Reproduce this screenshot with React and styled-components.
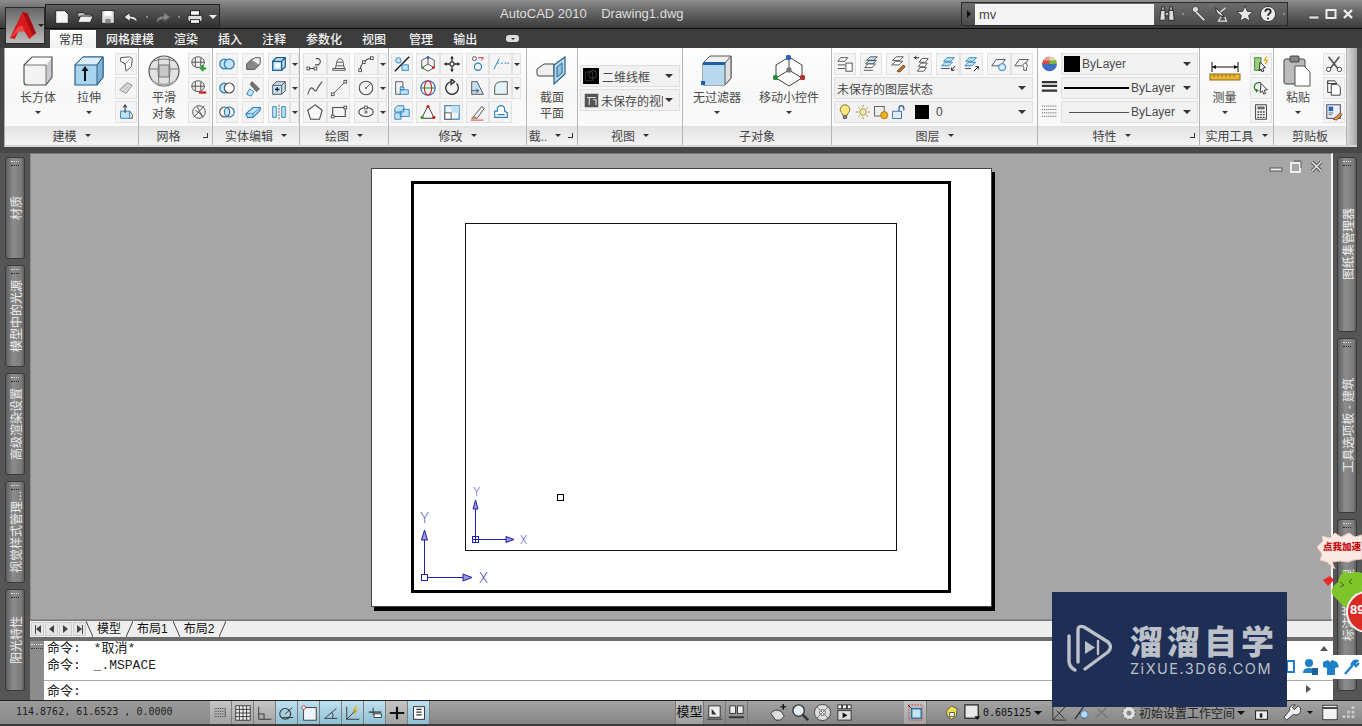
import React from 'react';
import styled, { createGlobalStyle } from 'styled-components';

const Global = createGlobalStyle`
  html, body { margin: 0; padding: 0; overflow: hidden; background: #404040; }
  body { font-family: "Liberation Sans", "Noto Sans CJK SC", sans-serif; }
  * { box-sizing: border-box; }
`;

const Screen = styled.div`position: relative; width: 1362px; height: 726px; display: flex; flex-direction: column; overflow: hidden; background: #474747;`;

/* ---------- drawings ---------- */
const D = '#4a4a4a', B = '#2b80b8', L = '#c4e2f5', W = '#fbfbfb';
const G = {
  wedge: <><path d="M4 3l10-1 3 2-1 9-6 5-1-8-5-3z" fill={W} stroke={D}/><path d="M9 10l6-6" stroke="#888"/></>,
  press: <><path d="M3 12l8-8 6 3-7 9z" fill="#ddd" stroke="#888"/><path d="M6 11l5-5M8 13l5-5" stroke="#aaa"/></>,
  presspull: <><path d="M4 9h10v8H4z" fill={L} stroke={B}/><path d="M9 11V2M7 5l2-3 2 3" stroke="#111"/><path d="M14 9l3 4v4h-3" stroke={D}/></>,
  meshadd: <><ellipse cx="9" cy="8" rx="7" ry="6" fill="#eee" stroke={D}/><path d="M2 8h14M6 3v10M12 3v10" stroke={D}/><path d="M14 11v7M11 15h7" stroke="#2a9d2a" strokeWidth="2.4"/></>,
  meshsub: <><ellipse cx="9" cy="8" rx="7" ry="6" fill="#eee" stroke={D}/><path d="M2 8h14M6 3v10M12 3v10" stroke={D}/><path d="M10 15h8" stroke="#c22" strokeWidth="2.6"/></>,
  meshcut: <><circle cx="10" cy="10" r="7" fill="#eee" stroke={D}/><path d="M4 16L16 3M6 8l8 6M8 4l6 12" stroke={D}/></>,
  union: <><circle cx="7.5" cy="10" r="5.5" fill={L} stroke={B} strokeWidth="1.4"/><circle cx="12.5" cy="10" r="5.5" fill={L} stroke={B} strokeWidth="1.4"/></>,
  subtract: <><circle cx="7.5" cy="10" r="5.5" fill={L} stroke={B} strokeWidth="1.4"/><circle cx="12.5" cy="10" r="5.5" fill="#fff" stroke={D} strokeWidth="1.2"/></>,
  intersect: <><circle cx="7.5" cy="10" r="5.5" fill="#fff" stroke={D} strokeWidth="1.2"/><circle cx="12.5" cy="10" r="5.5" fill="none" stroke={B} strokeWidth="1.4"/><path d="M10 5.5a5.5 5.5 0 010 9 5.5 5.5 0 010-9z" fill={L}/></>,
  extrudeface: <><path d="M3 10l5-5h9v6l-5 5H3z" fill="#888" stroke={D}/><path d="M8 5l5-2h5v6l-1 2" fill="#eee" stroke={D}/></>,
  taper: <><path d="M3 17l3-6 5 3-3 5z" fill={L} stroke={B}/><path d="M9 3l8 8-3 3-7-8z" fill="#777" stroke={D}/></>,
  eraser: <><path d="M2 12l8-7h8v3l-8 8H4z" fill={L} stroke={B} strokeWidth="1.2"/><path d="M2 12h8v4M10 12l8-7" stroke={B}/></>,
  cube: <><path d="M3 7l4-4h10v10l-4 4H3z" fill={L} stroke="#1a5f90" strokeWidth="1.4"/><path d="M3 7h10v10M13 7l4-4" stroke="#1a5f90" strokeWidth="1.4"/><rect x="6" y="9" width="5" height="5" fill="#fff"/></>,
  cube2: <><path d="M3 7l4-4h10v10l-4 4H3z" fill={L} stroke={D}/><path d="M3 7h10v10M13 7l4-4" stroke={D}/><path d="M8 9v5M5.5 11.5h5" stroke="#111" strokeWidth="1.2"/></>,
  split: <><path d="M3 4h4v12H3zM13 4h4v12h-4z" fill={L} stroke={B}/><path d="M10 2v16" stroke={D} strokeDasharray="2 1.5"/></>,
  polyline: <><path d="M2 15h7M11 4h3q4 3 0 7h-4" stroke={D} strokeWidth="1.2"/><rect x="1" y="13.5" width="3" height="3" fill="#fff" stroke={D}/><rect x="9" y="13.5" width="3" height="3" fill="#fff" stroke={D}/></>,
  helix: <><path d="M6 15l2-9q3-4 6 0l2 9M7 12h8M8 8h6" stroke={D}/><path d="M3 17h14v-2H3z" fill="#eee" stroke={D}/></>,
  arc: <><path d="M3 17Q5 6 16 3" stroke={D} strokeWidth="1.2"/><rect x="2" y="15.5" width="3" height="3" fill="#fff" stroke={D}/><rect x="15" y="2" width="3" height="3" fill="#fff" stroke={D}/><rect x="6" y="6.5" width="3" height="3" fill="#fff" stroke={D}/></>,
  spline: <path d="M2 17q3-10 6-6t4 1 6-9" stroke={D} strokeWidth="1.2"/>,
  line: <><path d="M3 17L17 3" stroke={D}/><rect x="1.5" y="15.5" width="3" height="3" fill="#fff" stroke={D}/><rect x="15.5" y="1.5" width="3" height="3" fill="#fff" stroke={D}/></>,
  circle: <><circle cx="10" cy="10" r="7.5" stroke={D} strokeWidth="1.2"/><path d="M10 10l5-5" stroke={D}/><circle cx="10" cy="10" r="1" fill={D}/></>,
  pentagon: <path d="M10 2l8 6-3 10H5L2 8z" fill="#f8f8f8" stroke={D} strokeWidth="1.2"/>,
  rect: <><path d="M3 5h14v10H3z" stroke={D} strokeWidth="1.2"/><rect x="1.5" y="13.5" width="3" height="3" fill="#fff" stroke={D}/><rect x="15.5" y="3.5" width="3" height="3" fill="#fff" stroke={D}/></>,
  ellipse: <><ellipse cx="10" cy="10" rx="8" ry="5" stroke={D} strokeWidth="1.2"/><path d="M10 8v4M8 10h4" stroke={D}/><rect x="8.5" y="3.5" width="3" height="3" fill="#fff" stroke={D}/></>,
  scale: <><path d="M2 18L18 2" stroke="#111" strokeWidth="1.4"/><circle cx="6" cy="6" r="3" fill={L} stroke={B}/><rect x="10" y="11" width="7" height="6" fill={L} stroke={B}/></>,
  rot3d: <><path d="M10 2l7 4v8l-7 4-7-4V6z" stroke={D}/><path d="M10 10V4M10 10l-5 3M10 10l5 3" stroke={D}/><circle cx="10" cy="3" r="1.6" fill="#2a62b8"/><circle cx="4" cy="14" r="1.6" fill="#2a9d2a"/><circle cx="16" cy="14" r="1.6" fill="#c22"/></>,
  move: <><path d="M10 2v16M2 10h16" stroke="#222" strokeWidth="1.4"/><path d="M8 4l2-3 2 3zM8 16l2 3 2-3zM4 8l-3 2 3 2zM16 8l3 2-3 2z" fill="#222"/><rect x="8" y="8" width="4" height="4" fill="#fff" stroke="#222"/></>,
  align: <><path d="M3 3h8v6h-3" stroke={D} fill="none"/><path d="M3 3v14h6" stroke={D}/><path d="M8 12h9v5H8zM8 9h4v3H8z" fill={L} stroke={B}/></>,
  globe: <><circle cx="10" cy="10" r="8" fill="#eee" stroke="#2a62b8" strokeWidth="1.2"/><ellipse cx="10" cy="10" rx="4" ry="8" stroke="#c22" strokeWidth="1.2"/><path d="M2 10h16" stroke="#2a9d2a" strokeWidth="1.2"/></>,
  rotate: <path d="M15 5a7 7 0 11-5-2M9 0v6l4-3z" stroke="#333" strokeWidth="1.5"/>,
  stack: <><path d="M2 6l3-3h7v7H2zM8 10l3-3h7v8H8zM2 11h7v7H2z" fill={L} stroke={B}/></>,
  mirror: <><path d="M10 3L3 17M10 3l7 14M3 17h14" stroke="#333"/><circle cx="10" cy="4" r="1.8" fill="#c22"/><circle cx="3.5" cy="16" r="1.8" fill="#2a9d2a"/><circle cx="16.5" cy="16" r="1.8" fill="#c22"/></>,
  fillet3: <><rect x="2" y="3" width="16" height="15" stroke={B} strokeWidth="1.3"/><rect x="9" y="3" width="9" height="8" fill={L}/><rect x="2" y="11" width="7" height="7" fill="#fff" stroke={D}/></>,
  orbit: <><circle cx="10" cy="13" r="4" stroke={B} strokeWidth="1.3"/><circle cx="6" cy="4" r="2.2" stroke={D}/><path d="M10 3h6M14 6l2-3" stroke="#c22"/></>,
  break: <path d="M2 16L8 4M6 9h2M10 9h2M14 9h2M17 9h2" stroke={B} strokeWidth="1.1"/>,
  stretch: <><path d="M3 3h6l7 14H3z" fill={L} stroke={D}/><path d="M3 13h7M8 11l3 2-3 2" stroke={D}/></>,
  round: <path d="M3 17V10Q3 3 11 3h6v14z" fill="#e4f2fa" stroke={D}/>,
  brush: <><path d="M3 17l3-3 8-10 3 2-8 11z" fill="#eee" stroke={D}/><path d="M2 19h14" stroke="#c33"/><path d="M3 17l3-3 3 3-3 1z" fill="#b96"/></>,
  offset: <path d="M3 16h14v-5l-3-2V7q0-4-4-4T6 7v2H3zM6 13h8" fill="#fff" stroke={B} strokeWidth="1.3"/>,
  layer1: <><path d="M2 7l3-4h8l-3 4z" fill="#fff" stroke={D}/><path d="M2 11h8M2 15h8" stroke={D}/><rect x="11" y="9" width="7" height="9" fill="#fff" stroke={D}/></>,
  layer2: <><path d="M5 6l4-4h8l-4 4zM4 10l4-4h8l-4 4z" fill={L} stroke={D}/><path d="M3 14l4-4h8l-4 4z" fill="#fff" stroke={D}/><path d="M2 17h10" stroke={D}/></>,
  layer3: <><path d="M4 6l4-4h8l-4 4zM3 11l4-4h8l-4 4z" fill="#fff" stroke={D}/><path d="M9 18l7-7 2 2-6 6z" fill="#b8722a" stroke="#6a3c10"/></>,
  layer4: <><path d="M8 8l3-4h7l-3 4zM7 13l3-4h7l-3 4zM6 18l3-4h7l-3 4z" fill="#fff" stroke={D}/><path d="M2 3h6M5 1l-2 2 2 2" stroke="#111"/></>,
  layer5: <><path d="M5 7l4-4h8l-4 4zM3 12l4-4h8l-4 4z" fill={L} stroke={B}/><path d="M2 15h10" stroke={D}/><path d="M18 12l-4 5M14 14v3h3" stroke="#111"/></>,
  layer6: <><path d="M3 7l4-4h8l-4 4zM2 12l4-4h8l-4 4z" fill={L} stroke={B}/><path d="M2 15h7" stroke={D}/><path d="M12 18l5-5M14 13h3v3" stroke="#111"/></>,
  layer7: <><path d="M2 12l5-7h10l-3 4" stroke={D}/><path d="M2 12h8" stroke={D}/><circle cx="13.5" cy="13.5" r="4" fill={L} stroke={B}/><circle cx="13.5" cy="13.5" r="1.4" fill="#fff"/></>,
  layer8: <><path d="M2 12l5-7h10l-3 4M2 12h8" stroke={D}/><path d="M13 9a3 3 0 013 3l-1 2v3h-3v-3l-1-2a3 3 0 012-3z" fill="#fff" stroke={D}/></>,
  bulb: <><path d="M10 1a6 6 0 016 6c0 3-3 4-3 7H7c0-3-3-4-3-7a6 6 0 016-6z" fill="#ffe680" stroke="#6a5a20"/><path d="M8 15h4v3H8z" fill="#99b" stroke="#444"/></>,
  sun: <><circle cx="10" cy="10" r="4" fill="#fff2a8" stroke="#8a7a2a"/><path d="M10 1v3M10 16v3M1 10h3M16 10h3M4 4l2 2M14 14l2 2M4 16l2-2M14 6l2-2" stroke="#8a7a2a"/></>,
  freeze: <><rect x="2" y="3" width="12" height="12" fill="#eee" stroke="#444"/><circle cx="14" cy="14" r="4.5" fill="#f0b020" stroke="#a56a00"/></>,
  lock: <><rect x="2" y="9" width="11" height="9" fill="#d9ecf8" stroke="#2a5f90"/><path d="M10 9V5a3 3 0 016 0v3" stroke="#2a5f90" strokeWidth="1.5"/></>,
  wheel: <><circle cx="10" cy="10" r="8.5" fill="#7c3fb0"/><path d="M10 10V1.500A8.500 8.500 0 0118.500 10z" fill="#f1c232"/><path d="M10 10H1.500A8.500 8.500 0 0110 1.500z" fill="#d94b3a"/><path d="M1.500 10h17a8.500 8.500 0 01-17 0z" fill="#3c6fc0"/><path d="M3 6h14a8 8 0 00-14 0z" fill="#e9e9e9" opacity=".6"/><path d="M10 6h8l.5 4H10z" fill="#5fb04a" opacity=".8"/></>,
  lines: <path d="M1 3h18M1 7.500h18M1 13h18" stroke="#333" strokeWidth="2.600"/>,
  dashes: <path d="M1 3h18M1 7h18M1 11h18M1 15h18" stroke="#555" strokeDasharray="1.500 1"/>,
  matchprop: <><rect x="3" y="3" width="7" height="14" fill="#9bd07a" stroke="#3a7a2a"/><path d="M9 8l6 6-3 .5L13 18l-2 .5-1-3-2 2z" fill="#fff" stroke="#222"/><path d="M16 2l-2 4h3l-2 4" stroke="#e6a800" strokeWidth="1.400"/></>,
  quick: <><path d="M10 4H7a5 5 0 00-4 7l2 2M7 12l-2 2V11" stroke="#2a7a3a" strokeWidth="1.400"/><path d="M10 5l7 7-3.400.4L15 16l-2 .8-1.300-3.400L9 15z" fill="#fff" stroke="#222"/></>,
  calc: <><rect x="4" y="2" width="12" height="16" fill="#f2f2f2" stroke="#333"/><rect x="6" y="4" width="8" height="3" fill="#666"/><path d="M6 10h2M9 10h2M12 10h2M6 13h2M9 13h2M12 13h2M6 16h2M9 16h2M12 16h2" stroke="#444" strokeWidth="1.400"/></>,
  cut: <><path d="M4 2l11 14M16 2L5 16" stroke="#555" strokeWidth="1.800"/><circle cx="4" cy="16" r="2.400" stroke="#333" fill="#fff"/><circle cx="16" cy="16" r="2.400" stroke="#333" fill="#fff"/></>,
  copy: <><path d="M3 2h8l2 3H3z M3 2v13h5" fill="#fff" stroke="#333"/><path d="M7 6h7l3 3v9H7z" fill="#fff" stroke="#333"/></>,
  matchbrush: <><rect x="2" y="2" width="15" height="15" fill="#e8eef8" stroke="#334"/><rect x="4" y="4" width="5" height="5" fill="#2a5fb0"/><path d="M4 11h5M4 13h4" stroke="#666"/><path d="M9 18l8-7 2 2-6 6z" fill="#d69a2a" stroke="#845"/></>,
  view1: <><rect x="0" y="0" width="20" height="20" fill="#000"/><circle cx="12" cy="8" r="5" stroke="#555"/><path d="M3 5h9v11H3z" stroke="#444"/></>,
  view2: <><rect x="1" y="1" width="18" height="18" fill="#555"/><path d="M4 6h12M7 6v10M12 9h4v7" stroke="#ddd" strokeWidth="1.500"/></>,
  fnew: <path d="M3 3h10l4 4v10H3z" fill="#f4f4f4" stroke="#222"/>,
  fopen: <><path d="M2 5h6l2 2h7v3H2z" fill="#bbb" stroke="#222"/><path d="M2 16l3-7h14l-3 7z" fill="#eee" stroke="#222"/></>,
  fsave: <><path d="M3 3h14v14H3z" fill="#ddd" stroke="#222"/><rect x="6" y="3.500" width="8" height="5" fill="#fff"/><rect x="7" y="12" width="6" height="5" fill="#888"/></>,
  undo: <path d="M17 16q0-7-8-7V5L2 10l7 5v-3q4 0 8 4z" fill="#e9e9e9" stroke="#222"/>,
  redo: <path d="M3 16q0-7 8-7V5l7 5-7 5v-3q-4 0-8 4z" fill="#888" stroke="#555"/>,
  print: <><rect x="2" y="8" width="16" height="7" rx="2" fill="#ddd" stroke="#111"/><rect x="5" y="3" width="10" height="5" fill="#fff" stroke="#111"/><rect x="5" y="13" width="10" height="4" fill="#fff" stroke="#111"/></>,
  binoc: <><path d="M3 6h5v11H2zM12 6h5l1 11h-6z" fill="#ddd" stroke="#222"/><path d="M4 2h3v4H4zM13 2h3v4h-3zM8 8h4v4H8z" fill="#bbb" stroke="#222"/></>,
  key: <><circle cx="6" cy="5" r="3.500" fill="#ddd" stroke="#333"/><path d="M8 7l9 9-2 2-9-9" fill="#ddd" stroke="#333"/></>,
  sat: <><path d="M3 3q0 9 10 10z" fill="#ddd" stroke="#222"/><path d="M8 8l6-5M9 13l-3 5h9l-2-5" stroke="#ddd" strokeWidth="1.400"/></>,
  star: <path d="M10 1l2.600 6 6.400.5-5 4.200 1.600 6.300-5.600-3.400L4.400 18 6 11.700 1 7.500 7.400 7z" fill="#e8e8e8" stroke="#333"/>,
  help: <><circle cx="10" cy="10" r="8.500" fill="#ececec" stroke="#222"/><path d="M7 7.500a3 3 0 116 0c0 2-3 2-3 4.500" stroke="#222" strokeWidth="2"/><circle cx="10" cy="15" r="1.200" fill="#222"/></>,
  s_snap: <path d="M3 5h12M3 8h12M3 11h12M3 14h12M15 5v9" stroke="#222" strokeDasharray="1 1"/>,
  s_grid: <><rect x="2" y="2" width="16" height="16" fill="#eee" stroke="#333"/><path d="M2 6h16M2 10h16M2 14h16M6 2v16M10 2v16M14 2v16" stroke="#333"/></>,
  s_ortho: <path d="M3 3v14h14M3 11h6v6" stroke="#333"/>,
  s_polar: <><circle cx="8" cy="11" r="6" stroke="#333" strokeWidth="1.200"/><path d="M8 11l8-7M5 15h12" stroke="#333"/></>,
  s_osnap: <><rect x="4" y="4" width="14" height="14" fill="#eef6fb" stroke="#333"/><circle cx="4" cy="4" r="2.200" fill="#fff" stroke="#c33"/></>,
  s_otrack: <path d="M3 16L16 5M3 16h14M11 9q2 3 1 7" stroke="#333"/>,
  s_ducs: <><path d="M3 17V3M3 17h14M3 17L12 8" stroke="#333"/><path d="M14 2l-3 5h3l-2 4" stroke="#e6a800" strokeWidth="1.400"/></>,
  s_dyn: <><path d="M3 9h14" stroke="#333" strokeWidth="1.400"/><path d="M8 4v8" stroke="#333"/><rect x="9" y="11" width="8" height="4" fill="#fff" stroke="#333"/></>,
  s_lw: <path d="M2 10h16M10 3v14" stroke="#111" strokeWidth="2.400"/>,
  s_qp: <><rect x="4" y="3" width="12" height="14" fill="#fff" stroke="#222"/><path d="M7 6h6M7 9h6M7 12h6" stroke="#333" strokeWidth="1.400"/></>,
  s_layout1: <><path d="M4 3h12v12H4z" fill="#eee" stroke="#333"/><path d="M7 6v6h5z" fill="#333"/><path d="M2 17h16" stroke="#333"/></>,
  s_layout2: <><path d="M3 3h6v8H3zM11 3h6v8h-6z" fill="#eee" stroke="#333"/><path d="M2 15h16" stroke="#333" strokeWidth="2"/></>,
  s_pan: <><path d="M2 11q4-6 11-2l3 5-4 4H7z" fill="#ddd" stroke="#333"/><path d="M15 1v6M12 4h6" stroke="#111" strokeWidth="1.400"/></>,
  s_zoom: <><circle cx="8" cy="8" r="6" fill="#e4eef5" stroke="#333" strokeWidth="1.400"/><path d="M12 12l6 6" stroke="#333" strokeWidth="2.600"/></>,
  s_wheel: <><circle cx="10" cy="10" r="8.500" fill="#ddd" stroke="#444"/><circle cx="10" cy="10" r="3" fill="#fff" stroke="#444"/><path d="M4 4l12 12M16 4L4 16" stroke="#777"/></>,
  s_show: <><rect x="3" y="2" width="4" height="4" fill="#fff" stroke="#333"/><rect x="8" y="2" width="4" height="4" fill="#fff" stroke="#333"/><rect x="13" y="2" width="4" height="4" fill="#fff" stroke="#333"/><rect x="3" y="8" width="14" height="10" fill="#ddd" stroke="#333"/><path d="M8 10l5 3-5 3z" fill="#111"/></>,
  s_maxvp: <><path d="M3 2h14v16H3z" stroke="#c33" strokeDasharray="1.500 1.500"/><rect x="6" y="6" width="10" height="10" fill={L} stroke="#2a6f9a" strokeWidth="1.400"/><path d="M2 2l4 4" stroke="#333"/></>,
  s_hand: <><path d="M5 8l5-5 6 3-1 8-5 3-5-4z" fill="#ece24a" stroke="#555"/><path d="M8 10h5v4H8z" fill="#fff" stroke="#555"/></>,
  s_vp: <><rect x="2" y="2" width="14" height="14" fill="#e8e8e8" stroke="#222" strokeWidth="1.300"/><path d="M12 14h6l-3 4z" fill="#111"/></>,
  s_anno1: <path d="M4 2v16h14M4 18L17 4M8 8l8 8" stroke="#333"/>,
  s_anno2: <><path d="M4 17l5-7 5 7M9 10l4-6" stroke="#333" strokeWidth="1.400"/><circle cx="14" cy="12" r="4" fill="#b8d8f0" stroke="#47a"/></>,
  s_anno3: <path d="M3 15l6-5 6 5M9 10l5-5M5 6l4 4" stroke="#777" strokeWidth="1.600"/>,
  s_gear: <><circle cx="10" cy="10" r="8" fill="#ddd" stroke="#444" strokeDasharray="3 2"/><circle cx="10" cy="10" r="4" fill="#888" stroke="#eee" strokeWidth="1.500"/></>,
  s_lock: <><rect x="3" y="8" width="14" height="10" fill="#eee" stroke="#222" strokeWidth="1.200"/><rect x="8" y="11" width="3" height="5" fill="#222"/></>,
  s_wrench: <path d="M17 3l-4 4-2-2 3-3a5 5 0 00-6 6L2 15l3 3 7-6a5 5 0 005-9z" fill="#eee" stroke="#333"/>,
  s_win: <><rect x="2" y="2" width="16" height="16" fill="#f2f2f2" stroke="#333"/><path d="M2 5h16" stroke="#333" strokeWidth="2"/></>,
  s_grip: <path d="M14 3h3v3h-3zM9 8h3v3H9zM14 8h3v3h-3zM4 13h3v3H4zM9 13h3v3H9zM14 13h3v3h-3z" fill="#ccc"/>,
};
const Glyph = ({ name, size = 18 }) => (
  <svg width={size} height={size} viewBox="0 0 20 20" fill="none">{G[name]}</svg>
);

const Big = {
  box: <><path d="M2 10l8-8h20v20l-6 8H5q-3 0-3-3z" fill="#f2f2f2"/><path d="M24 10l6-8v20l-6 8z" fill="#c8ccd0"/><path d="M2 10l8-8h20l-6 8z" fill="#fbfbfb"/><path d="M2 10h22v20" fill="none" stroke="#777"/><path d="M2 10l8-8h20v20l-6 8H5q-3 0-3-3z" fill="none" stroke="#555" strokeWidth="1.200"/></>,
  extrude: <><path d="M2 10l8-8h20v20l-6 8H2z" fill="#a8d4ee" stroke="#2a5f85" strokeWidth="1.200"/><path d="M2 10l8-8h20l-6 8z" fill="#d9eefa" stroke="#2a5f85"/><path d="M24 10l6-8v20l-6 8z" fill="#7fb4d6" stroke="#2a5f85"/><path d="M12 26V13" stroke="#111" strokeWidth="2"/><path d="M8.500 16l3.500-5 3.500 5z" fill="#111"/></>,
  smooth: <><circle cx="16" cy="16" r="15" fill="#e2e2e2" stroke="#555" strokeWidth="1.200"/><path d="M1.500 14h29M11 2q-2 14 0 27M21 2q2 14 0 27" stroke="#777" fill="none"/><path d="M6 6q10-4 20 0" stroke="#777" fill="none"/><rect x="11" y="10" width="10" height="12" fill="#c8c8c8" stroke="#777"/><path d="M3 24q13 9 26 0l-3 4q-10 6-20 0z" fill="#aaa"/></>,
  section: <><path d="M1 14l7-5h10v12H3q-2 0-2-2z" fill="#f0f0f0" stroke="#444"/><path d="M18 10l11-8v17l-11 10z" fill="#b8dcf2" stroke="#2a5f85" strokeWidth="1.200"/><path d="M21 12l5-4v10l-5 4z" fill="#8fc4e6" stroke="#2a5f85"/></>,
  filter: <><path d="M2 8l7-7h21v22l-6 7H2z" fill="#f0f0f0" stroke="#555"/><path d="M2 8h22v22H2z" fill="#b6d9ef"/><path d="M24 8l6-7v22l-6 7z" fill="#e0e0e0" stroke="#555"/><path d="M2 7h22v3H2z" fill="#1f5fa8"/><rect x="0" y="26" width="4" height="4" fill="#1f5fa8"/></>,
  gizmo: <><path d="M16 2l13 8v13l-13 8-13-8V10z" fill="none" stroke="#444"/><path d="M16 15V2M16 15L3 23M16 15l13 8" stroke="#444"/><rect x="13" y="0" width="5" height="5" rx="1.500" fill="#2a62b0"/><rect x="0" y="20" width="5" height="5" rx="1.500" fill="#2a8f3a"/><rect x="27" y="20" width="5" height="5" rx="1.500" fill="#b03030"/><rect x="13.500" y="12.500" width="5" height="5" rx="1.500" fill="#777"/></>,
  measure: <><path d="M3 12h26" stroke="#111"/><path d="M3 7v10M29 7v10" stroke="#111"/><path d="M3 12l4-2v4zM29 12l-4-2v4z" fill="#111"/><rect x="1" y="19" width="30" height="6" fill="#e8b632" stroke="#8a6a10"/><path d="M5 19v3M9 19v3M13 19v3M17 19v3M21 19v3M25 19v3" stroke="#8a6a10"/></>,
  paste: <><rect x="2" y="4" width="21" height="25" rx="2" fill="#bbb" stroke="#444"/><rect x="8" y="1" width="9" height="6" rx="1" fill="#888" stroke="#444"/><path d="M13 11h9l6 6v14H13z" fill="#fff" stroke="#555"/></>,
};
const BigIcon = ({ name }) => <svg width="32" height="32" viewBox="0 0 32 32">{Big[name]}</svg>;

/* ---------- title bar ---------- */
const TitleBar = styled.header`
  height: 29px; flex: none; display: flex; align-items: flex-start; position: relative;
  background: linear-gradient(#8d8d8d, #6a6a6a 35%, #3b3b3b 96%, #0e0e0e 97%);
`;
const Qat = styled.div`
  margin: 4px 0 0 45px; width: 175px; height: 24px; display: flex; align-items: center; gap: 5px; padding-left: 7px;
  background: linear-gradient(#5e5e5e, #2f2f2f); border: 1px solid #222; border-bottom: 0;
`;
const QatDot = styled.i`width: 2px; height: 2px; background: #888; margin: 0 1px;`;
const Caret = styled.i`
  display: inline-block; width: 0; height: 0; flex: none;
  border-left: ${p => p.$s || 3}px solid transparent; border-right: ${p => p.$s || 3}px solid transparent;
  border-top: ${p => p.$s || 3}px solid ${p => p.$c || '#333'};
`;
const AppButton = styled.div`
  position: absolute; z-index: 3; left: 5px; top: 7px; width: 40px; height: 37px; border: 1px solid #2a2a2a;
  background: linear-gradient(#666, #bbb); display: flex; align-items: center; padding-left: 2px; gap: 1px;
`;
const Title = styled.div`
  position: absolute; left: 500px; top: 6px; color: #dedede; font-size: 13px; line-height: 16px; white-space: pre;
`;
const Search = styled.div`
  margin: 2px 0 0 auto; width: 327px; height: 24px; display: flex; align-items: center; border: 1px solid #2b2b2b;
  background: linear-gradient(#6c6c6c, #4c4c4c);
`;
const SearchArrow = styled.i`width: 0; height: 0; margin: 0 4px 0 5px; border-left: 4px solid #111; border-top: 4px solid transparent; border-bottom: 4px solid transparent;`;
const SearchInput = styled.div`width: 179px; height: 21px; background: #f4f4f4; color: #444; font-size: 13px; line-height: 21px; padding-left: 4px;`;
const SearchIcons = styled.div`display: flex; align-items: center; gap: 5px; padding-left: 4px;`;
const WinButtons = styled.div`display: flex; gap: 5px; align-items: center; margin: 8px 8px 0 20px;`;
const WinBtn = styled.svg`width: 12px; height: 12px;`;

/* ---------- tabs ---------- */
const TabBar = styled.nav`height: 19px; flex: none; display: flex; align-items: flex-end; padding-left: 50px; background: #3d3d3d;`;
const Tab = styled.div`
  height: 18px; padding: ${p => (p.$active ? '0 13px 0 9px' : '0 10px')}; margin-left: ${p => p.$ml || 0}px; font-size: 12px; line-height: 20px;
  color: ${p => (p.$active ? '#333' : '#f1f1f1')};
  background: ${p => (p.$active ? 'linear-gradient(#fff,#f0f0f0)' : 'transparent')};
  font-weight: ${p => (p.$active ? 400 : 500)};
`;
const TabPill = styled.i`width: 13px; height: 7px; margin: 0 0 6px 19px; background: #ddd; border-radius: 3px; display: flex; align-items: center; justify-content: center;`;

/* ---------- ribbon ---------- */
const Ribbon = styled.section`
  height: 99px; flex: none; margin: 0 5px 0 4px; display: flex; background: #ddd;
  border-left: 1px solid #aaa; border-bottom: 2px solid #d6d6d6;
`;
const Panel = styled.div`
  width: ${p => p.$w}px; flex: none; display: flex; flex-direction: column; border-right: 1px solid #b4b4b4;
`;
const RibbonEnd = styled.div`flex: 1; background: linear-gradient(90deg, #d8d8d8, #a5a5a5);`;
const Body = styled.div`
  height: 78px; flex: none; display: flex; gap: ${p => p.$gap || 0}px; padding: 5px 0 0 ${p => p.$pl || 0}px;
  background: linear-gradient(#fefefe, #f7f7f7 60%, #fafafa);
`;
const Footer = styled.div`
  flex: 1; position: relative; display: flex; align-items: center; justify-content: center; gap: 8px; padding: 0 ${p => p.$pr || 0}px 0 0;
  font-size: 12px; color: #444; background: linear-gradient(#e2e2e2, #f4f4f4);
`;
const Launcher = styled.i`
  position: absolute; right: 4px; top: 7px; width: 5px; height: 5px; border-right: 1px solid #333; border-bottom: 1px solid #333;
`;
const Large = styled.div`
  width: ${p => p.$w}px; flex: none; display: flex; flex-direction: column; align-items: center; gap: 3px;
  font-size: 12px; line-height: 16px; color: #4a4a4a; padding-top: 2px;
`;
const LargeLabel = styled.div`text-align: center; white-space: nowrap; margin-bottom: 2px;`;
const Col = styled.div`display: flex; flex-direction: column; gap: 2px; width: ${p => (p.$w ? `${p.$w}px` : 'auto')}; padding-top: ${p => p.$pt || 0}px;`;
const Row = styled.div`display: flex; gap: ${p => p.$gap || 0}px;`;
const Small = styled.div`
  width: ${p => p.$w || 22}px; height: 22px; flex: none; display: flex; align-items: center; justify-content: center;
  background: ${p => (p.$bare ? 'transparent' : '#f4f4f4')}; border: 1px solid ${p => (p.$bare ? 'transparent' : '#e2e2e2')};
`;
const Drop = styled(Small)`width: 9px;`;
const Combo = styled.div`
  width: ${p => p.$w}px; height: ${p => p.$h || 22}px; flex: none; display: flex; align-items: center; gap: ${p => p.$gap ?? 2}px; padding: 0 6px 0 ${p => p.$pl ?? 2}px;
  background: #f1f1f1; border: 1px solid #dfdfdf; font-size: 12px; color: #4a4a4a; white-space: nowrap; overflow: hidden;
`;
const ComboText = styled.span`flex: 1; overflow: hidden;`;
const Swatch = styled.i`width: ${p => p.$s || 16}px; height: ${p => p.$s || 16}px; flex: none; background: #000;`;
const LineSample = styled.i`width: ${p => p.$w}px; height: ${p => p.$h}px; background: ${p => p.$c}; flex: none;`;
const DarkGap = styled.div`height: 6px; flex: none; background: #474747;`;

/* ---------- main ---------- */
const Main = styled.div`flex: 1; min-height: 0; display: flex;`;
const Palette = styled.aside`
  width: ${p => p.$w}px; flex: none; display: flex; flex-direction: column; gap: 6px; padding: 4px 5px 9px ${p => p.$pl}px; background: #565656;
`;
const PaletteTab = styled.div`
  height: ${p => p.$h}px; flex: ${p => (p.$h ? 'none' : 1)}; position: relative; display: flex; align-items: center; justify-content: center;
  border: 1px solid #3a3a3a; border-radius: 3px; background: linear-gradient(90deg, #5f5f5f, #8c8c8c 40%, #7b7b7b 85%, #5c5c5c);
  color: #ececec; font-size: 12px; overflow: hidden;
  &::before { content: ''; position: absolute; top: 3px; left: 5px; right: 5px; height: 3px; border-top: 1px dotted #ddd; border-bottom: 1px dotted #222; }
`;
const PaletteText = styled.span`writing-mode: vertical-rl; text-orientation: sideways; transform: rotate(180deg); white-space: nowrap;`;
const Center = styled.div`flex: 1; min-width: 0; display: flex; flex-direction: column;`;
const Canvas = styled.div`
  height: 467px; flex: none; position: relative; background: #a6a6a6; border: 1px solid #8b8b8b; border-right: 2px solid #f4f4f4; border-top-color: #777;
`;
const Paper = styled.div`position: absolute; left: 340px; top: 14px; width: 621px; height: 439px; background: #fff; border: 1px solid #444; box-shadow: 3px 4px 0 #000;`;
const Frame = styled.div`position: absolute; left: 39px; top: 12px; width: 540px; height: 412px; border: 3px solid #000;`;
const Viewport = styled.div`position: absolute; left: 93px; top: 54px; width: 432px; height: 328px; border: 1px solid #111;`;
const Overlay = styled.svg`position: absolute; left: -1px; top: -1px; width: 1303px; height: 467px;`;
const UcsText = styled.text`font-family: "Inter", "Liberation Sans", sans-serif; font-weight: 200; fill: #1d1db0;`;
const VpControls = styled.svg`position: absolute; right: 8px; top: 6px; width: 54px; height: 14px;`;

const LayoutBar = styled.div`
  height: 17px; flex: none; display: flex; align-items: center; background: #eeeeee; border-top: 1px solid #777; border-right: 2px solid #f4f4f4; font-size: 12px; color: #111;
`;
const Nav = styled.div`width: 13px; height: 14px; display: flex; align-items: center; justify-content: center; background: #e6e6e6; border: 1px solid #ccc;`;
const NavGroup = styled.div`display: flex; margin: 0 0 0 1px; gap: 1px;`;
const NavStop = styled.i`width: 1px; height: 9px; background: #444;`;
const Arrow = styled.i`
  width: 0; height: 0; border-top: 4px solid transparent; border-bottom: 4px solid transparent;
  ${p => (p.$dir === 'l' ? 'border-right: 5px solid #444;' : 'border-left: 5px solid #444;')}
`;
const LayoutTab = styled.span`padding: 0 5px 0 4px; line-height: 15px;`;
const Slant = styled.svg`width: 7px; height: 16px; flex: none;`;
const Separator = styled.div`height: 4px; flex: none; background: #6d6d6d;`;

const Command = styled.div`flex: 1; min-height: 0; display: flex; background: #8c8c8c;`;
const Gutter = styled.div`
  width: 14px; flex: none; position: relative;
  &::before { content: ''; position: absolute; top: 3px; left: 1px; width: 12px; height: 3px; border-top: 1px dotted #eee; border-bottom: 1px dotted #333; }
`;
const CommandMain = styled.div`flex: 1; min-width: 0; display: flex; flex-direction: column; background: #fff;`;
const History = styled.div`
  height: 40px; flex: none; padding: 0 3px; font-family: "Liberation Mono", "Noto Sans CJK SC", monospace; font-size: 13px; line-height: 16.5px; color: #222;
  border-bottom: 1px solid #aaa; position: relative; white-space: pre; word-spacing: 5px;
`;
const Prompt = styled.div`flex: 1; padding: 2px 3px 0; font-family: "Liberation Mono", "Noto Sans CJK SC", monospace; font-size: 13px; line-height: 18px; color: #222; position: relative;`;
const ScrollUp = styled.i`position: absolute; right: 5px; top: 5px; width: 0; height: 0; border-left: 4px solid transparent; border-right: 4px solid transparent; border-bottom: 5px solid #555;`;
const ScrollRight = styled.i`position: absolute; right: 22px; top: 4px; width: 0; height: 0; border-top: 4px solid transparent; border-bottom: 4px solid transparent; border-left: 5px solid #555;`;

/* ---------- status ---------- */
const Status = styled.footer`
  height: 26px; flex: none; display: flex; align-items: stretch; border-top: 1px solid #222; border-bottom: 2px solid #3a3a3a;
  background: linear-gradient(#a3a3a3, #858585); color: #222;
`;
const Coords = styled.div`width: 210px; flex: none; padding-left: 16px; font-family: "DejaVu Sans Mono", monospace; font-size: 10px; line-height: 22px; background: linear-gradient(#9a9a9a,#8a8a8a); white-space: pre;`;
const Toggle = styled.div`
  width: ${p => p.$w || 22}px; flex: none; display: flex; align-items: center; justify-content: center; border-right: 1px solid #7c7c7c;
  background: ${p => (p.$on ? 'linear-gradient(#bfe0ee,#8fc0d4)' : 'linear-gradient(#c6c6c6,#a2a2a2)')};
`;
const StatusIcon = styled.div`width: ${p => p.$w || 22}px; flex: none; display: flex; align-items: center; justify-content: center; border-right: ${p => (p.$edge ? '1px solid #777' : '0')};`;
const Spacer = styled.div`width: ${p => p.$w}px; flex: none;`;
const ModelLabel = styled.div`width: 29px; flex: none; font-size: 13px; line-height: 22px; text-align: center; color: #111; border-left: 1px solid #777; border-right: 1px solid #777; background: linear-gradient(#c0c0c0,#a0a0a0);`;
const ScaleText = styled.div`width: 64px; flex: none; display: flex; align-items: center; gap: 3px; font-family: "DejaVu Sans Mono", monospace; font-size: 10px; color: #111;`;
const Workspace = styled.div`width: 125px; flex: none; display: flex; align-items: center; gap: 2px; padding-left: 1px; font-size: 12px; color: #222; white-space: nowrap; overflow: hidden;`;
const StatusCaret = styled(Caret)`align-self: center; margin: 0 8px 0 3px;`;

/* ---------- overlays ---------- */
const Watermark = styled.div`
  position: absolute; left: 1052px; top: 592px; width: 235px; height: 115px; z-index: 5; background: #1f2e55; display: flex; align-items: center; gap: 16px; padding: 0 0 3px 14px;
`;
const MarkText = styled.div`display: flex; flex-direction: column; align-items: flex-start; color: #bcc0c8; width: 150px;`;
const MarkTitle = styled.div`font-size: 33px; line-height: 40px; font-weight: 900; letter-spacing: 4px; white-space: nowrap; font-family: "Noto Sans CJK SC", sans-serif;`;
const MarkSub = styled.div`font-size: 14.5px; line-height: 17px; letter-spacing: 1.5px; font-family: "Inter", sans-serif; font-weight: 400; white-space: nowrap;`;
const IconStrip = styled.div`position: absolute; z-index: 4; left: 1283px; top: 655px; width: 79px; height: 24px; background: #fff; display: flex; align-items: center; padding-left: 4px;`;
const Booster = styled.div`position: absolute; z-index: 6; left: 1316px; top: 532px; width: 46px; height: 100px;`;
const BoosterArt = styled.svg`position: absolute; left: 0; top: 0; width: 46px; height: 100px;`;
const BoostLabel = styled.span`position: absolute; left: 7px; top: 8px; font-size: 9.5px; line-height: 13px; font-weight: 900; color: #c40d12; white-space: nowrap; font-family: "Noto Sans CJK SC", sans-serif;`;
const BoostNum = styled.span`position: absolute; left: 34px; top: 71px; font-size: 13px; line-height: 14px; font-weight: 700; color: #fff; white-space: nowrap;`;

const Btn = ({ n, w, bare }) => <Small $w={w} $bare={bare}><Glyph name={n} /></Small>;
const Dd = () => <Drop><Caret /></Drop>;
const Cap = ({ children, arrow = true, launcher }) => (
  <Footer $pr={launcher ? 14 : 0}>{children}{arrow && <Caret $s={3.5} />}{launcher && <Launcher />}</Footer>
);
const Bar = ({ on, n, w }) => <Toggle $on={on} $w={w}><Glyph name={n} size={18} /></Toggle>;
const Ico = ({ n, w, edge, size = 19 }) => <StatusIcon $w={w} $edge={edge}><Glyph name={n} size={size} /></StatusIcon>;

export default function App() {
  return (
    <Screen>
      <Global />
      <TitleBar>
        <Qat>
          <Glyph name="fnew" /><Glyph name="fopen" /><Glyph name="fsave" /><Glyph name="undo" /><QatDot />
          <Glyph name="redo" /><QatDot /><Glyph name="print" /><Caret $c="#eee" $s={4} />
        </Qat>
        <Title>AutoCAD 2010    Drawing1.dwg</Title>
        <Search>
          <SearchArrow />
          <SearchInput>mv</SearchInput>
          <SearchIcons>
            <Glyph name="binoc" /><QatDot /><Glyph name="key" /><Glyph name="sat" /><Glyph name="star" /><Glyph name="help" /><QatDot />
          </SearchIcons>
        </Search>
        <WinButtons>
          <WinBtn viewBox="0 0 12 12"><rect x="1" y="8" width="10" height="3" fill="#ddd" stroke="#333" strokeWidth=".6" /></WinBtn>
          <WinBtn viewBox="0 0 12 12"><rect x="1.5" y="2" width="9" height="8" fill="none" stroke="#eee" strokeWidth="2" /></WinBtn>
          <WinBtn viewBox="0 0 12 12"><path d="M2 2l8 8M10 2l-8 8" stroke="#eee" strokeWidth="2.400" /></WinBtn>
        </WinButtons>
        <AppButton>
          <svg width="30" height="35" viewBox="0 0 30 34">
            <path d="M2 30L15 3l5 1 9 21-7 6-5-8h-6l-4 8z" fill="#d8191d" />
            <path d="M15 3l5 1 9 21-4 1z" fill="#a30f12" />
            <path d="M2 30l9-7h6l-2-6-4 1z" fill="#ef4a45" />
          </svg>
          <Caret $c="#222" $s={3.5} />
        </AppButton>
      </TitleBar>

      <TabBar>
        <Tab $active>常用</Tab><Tab>网格建模</Tab><Tab>渲染</Tab><Tab>插入</Tab><Tab>注释</Tab><Tab>参数化</Tab><Tab>视图</Tab><Tab $ml={3}>管理</Tab><Tab>输出</Tab>
        <TabPill><Caret $c="#333" $s={2.5} /></TabPill>
      </TabBar>

      <Ribbon>
        <Panel $w={134}>
          <Body $pl={8} $gap={1}>
            <Large $w={50}><BigIcon name="box" /><LargeLabel>长方体</LargeLabel><Caret /></Large>
            <Large $w={50}><BigIcon name="extrude" /><LargeLabel>拉伸</LargeLabel><Caret /></Large>
            <Col><Btn n="wedge" /><Btn n="press" /><Btn n="presspull" /></Col>
          </Body>
          <Cap>建模</Cap>
        </Panel>
        <Panel $w={74}>
          <Body $pl={5} $gap={4}>
            <Large $w={40}><BigIcon name="smooth" /><LargeLabel>平滑<br />对象</LargeLabel></Large>
            <Col><Btn n="meshadd" /><Btn n="meshsub" /><Btn n="meshcut" /></Col>
          </Body>
          <Cap arrow={false} launcher>网格</Cap>
        </Panel>
        <Panel $w={87}>
          <Body $pl={3} $gap={4}>
            <Col><Btn n="union" /><Btn n="subtract" /><Btn n="intersect" /></Col>
            <Col><Btn n="extrudeface" /><Btn n="taper" /><Btn n="eraser" /></Col>
            <Col>
              <Row><Btn n="cube" /><Dd /></Row>
              <Row><Btn n="cube2" /><Dd /></Row>
              <Row><Btn n="split" /><Dd /></Row>
            </Col>
          </Body>
          <Cap>实体编辑</Cap>
        </Panel>
        <Panel $w={89}>
          <Body $pl={3} $gap={4}>
            <Col>
              <Row><Btn n="polyline" w={24} /><Btn n="helix" w={23} /></Row>
              <Row><Btn n="spline" w={24} /><Btn n="line" w={23} /></Row>
              <Row><Btn n="pentagon" w={24} /><Btn n="rect" w={23} /></Row>
            </Col>
            <Col>
              <Row><Btn n="arc" w={24} /><Dd /></Row>
              <Row><Btn n="circle" w={24} /><Dd /></Row>
              <Row><Btn n="ellipse" w={24} /><Dd /></Row>
            </Col>
          </Body>
          <Cap>绘图</Cap>
        </Panel>
        <Panel $w={138}>
          <Body $pl={2} $gap={3}>
            <Col><Btn n="scale" /><Btn n="align" /><Btn n="stack" /></Col>
            <Col>
              <Row><Btn n="rot3d" w={24} /><Btn n="move" w={23} /></Row>
              <Row><Btn n="globe" w={24} /><Btn n="rotate" w={23} /></Row>
              <Row><Btn n="mirror" w={24} /><Btn n="fillet3" w={23} /></Row>
            </Col>
            <Col>
              <Row><Btn n="orbit" w={23} /><Btn n="break" w={23} /><Dd /></Row>
              <Row><Btn n="stretch" w={23} /><Btn n="round" w={23} /><Dd /></Row>
              <Row><Btn n="brush" w={23} /><Btn n="offset" w={23} /></Row>
            </Col>
          </Body>
          <Cap>修改</Cap>
        </Panel>
        <Panel $w={51}>
          <Body>
            <Large $w={50}><BigIcon name="section" /><LargeLabel>截面<br />平面</LargeLabel></Large>
          </Body>
          <Footer>截..<Caret $s={3.5} /><Spacer $w={6} /><Launcher /></Footer>
        </Panel>
        <Panel $w={105}>
          <Body $pl={2}>
            <Col $pt={12}>
              <Combo $w={100} $pl={2} $gap={3}><Glyph name="view1" size={16} /><ComboText>二维线框</ComboText><Caret $s={4} /></Combo>
              <Combo $w={100} $pl={3} $gap={2}><Glyph name="view2" size={15} /><ComboText>未保存的视图</ComboText><Caret $s={4} /></Combo>
            </Col>
          </Body>
          <Cap>视图</Cap>
        </Panel>
        <Panel $w={149}>
          <Body>
            <Large $w={68}><BigIcon name="filter" /><LargeLabel>无过滤器</LargeLabel><Caret /></Large>
            <Large $w={76}><BigIcon name="gizmo" /><LargeLabel>移动小控件</LargeLabel><Caret /></Large>
          </Body>
          <Cap arrow={false}>子对象</Cap>
        </Panel>
        <Panel $w={206}>
          <Body $pl={2}>
            <Col>
              <Row $gap={4}>
                <Btn n="layer1" /><Btn n="layer2" />
                <Row><Btn n="layer3" w={23} /><Btn n="layer4" w={23} /></Row>
                <Row><Btn n="layer5" w={24} /><Btn n="layer6" w={23} /></Row>
                <Row><Btn n="layer7" w={24} /><Btn n="layer8" w={22} /></Row>
              </Row>
              <Combo $w={199}><ComboText>未保存的图层状态</ComboText><Caret $s={4} /></Combo>
              <Combo $w={199}><Glyph name="bulb" size={16} /><Glyph name="sun" size={16} /><Glyph name="freeze" size={16} /><Glyph name="lock" size={16} /><Spacer $w={4} /><Swatch $s={14} /><Spacer $w={3} /><ComboText>0</ComboText><Caret $s={4} /></Combo>
            </Col>
          </Body>
          <Cap>图层</Cap>
        </Panel>
        <Panel $w={162}>
          <Body $pl={2} $gap={2}>
            <Col>
              <Small $bare $w={19}><Glyph name="wheel" /></Small>
              <Small $bare $w={19}><Glyph name="lines" /></Small>
              <Small $bare $w={19}><Glyph name="dashes" /></Small>
            </Col>
            <Col>
              <Combo $w={137}><Swatch /><ComboText>ByLayer</ComboText><Caret $s={4} /></Combo>
              <Combo $w={137}><LineSample $w={65} $h={2} $c="#000" /><ComboText>ByLayer</ComboText><Caret $s={4} /></Combo>
              <Combo $w={137} $pl={7}><LineSample $w={60} $h={1} $c="#555" /><ComboText>ByLayer</ComboText><Caret $s={4} /></Combo>
            </Col>
          </Body>
          <Cap launcher>特性</Cap>
        </Panel>
        <Panel $w={74}>
          <Body $gap={1}>
            <Large $w={49}><BigIcon name="measure" /><LargeLabel>测量</LargeLabel><Caret /></Large>
            <Col><Btn n="matchprop" /><Btn n="quick" /><Btn n="calc" /></Col>
          </Body>
          <Cap>实用工具</Cap>
        </Panel>
        <Panel $w={73}>
          <Body $gap={1}>
            <Large $w={48}><BigIcon name="paste" /><LargeLabel>粘贴</LargeLabel><Caret /></Large>
            <Col><Btn n="cut" /><Btn n="copy" /><Btn n="matchbrush" /></Col>
          </Body>
          <Cap arrow={false}>剪贴板</Cap>
        </Panel>
        <RibbonEnd />
      </Ribbon>
      <DarkGap />

      <Main>
        <Palette $w={30} $pl={5}>
          <PaletteTab $h={102}><PaletteText>材质</PaletteText></PaletteTab>
          <PaletteTab $h={102}><PaletteText>模型中的光源</PaletteText></PaletteTab>
          <PaletteTab $h={102}><PaletteText>高级渲染设置</PaletteText></PaletteTab>
          <PaletteTab $h={102}><PaletteText>视觉样式管理...</PaletteText></PaletteTab>
          <PaletteTab><PaletteText>阳光特性</PaletteText></PaletteTab>
        </Palette>
        <Center>
          <Canvas>
            <Paper>
              <Frame />
              <Viewport />
            </Paper>
            <Overlay viewBox="30 153 1303 467" fill="none">
              <g stroke="#1d1db0">
                <path d="M424.5 574V535M428 577.5H464" />
                <rect x="421.5" y="574.5" width="6" height="6" />
                <path d="M424.5 530l-3 10h6z" fill="#9a9ad8" />
                <path d="M463 574v7l9-3.500z" fill="#9a9ad8" />
                <path d="M475.500 536V508M479 539.500H506" />
                <rect x="472.500" y="536.500" width="6" height="6" />
                <path d="M472.500 539.500h6M475.500 536.500v6" />
                <path d="M475.500 500l-2.500 9h5z" fill="#9a9ad8" />
                <path d="M506 536.500v6l8-3z" fill="#9a9ad8" />
              </g>
              <UcsText x="420" y="523" fontSize="14">Y</UcsText>
              <UcsText x="479" y="583" fontSize="14">X</UcsText>
              <UcsText x="473" y="496" fontSize="11">Y</UcsText>
              <UcsText x="520" y="544" fontSize="11">X</UcsText>
              <rect x="557.500" y="494.500" width="6" height="6" stroke="#000" />
            </Overlay>
            <VpControls viewBox="0 0 54 14">
              <rect x="1" y="8" width="12" height="3" fill="#eee" stroke="#555" />
              <rect x="22" y="3" width="9" height="9" fill="none" stroke="#eee" strokeWidth="2" />
              <path d="M25 1h7v7" fill="none" stroke="#555" />
              <path d="M43 2l9 9M52 2l-9 9" stroke="#555" strokeWidth="3.400" />
              <path d="M43 2l9 9M52 2l-9 9" stroke="#eee" strokeWidth="1.400" />
            </VpControls>
          </Canvas>
          <LayoutBar>
            <NavGroup>
              <Nav><NavStop /><Arrow $dir="l" /></Nav><Nav><Arrow $dir="l" /></Nav><Nav><Arrow $dir="r" /></Nav><Nav><Arrow $dir="r" /><NavStop /></Nav>
            </NavGroup>
            <Slant viewBox="0 0 7 16"><path d="M0 0l7 16" stroke="#444" /></Slant>
            <LayoutTab>模型</LayoutTab>
            <Slant viewBox="0 0 7 16"><path d="M7 0L0 16" stroke="#444" /></Slant>
            <LayoutTab>布局1</LayoutTab>
            <Slant viewBox="0 0 7 16"><path d="M0 0l7 16" stroke="#444" /></Slant>
            <LayoutTab>布局2</LayoutTab>
            <Slant viewBox="0 0 7 16"><path d="M7 0L0 16" stroke="#444" /></Slant>
          </LayoutBar>
          <Separator />
          <Command>
            <Gutter />
            <CommandMain>
              <History>{'命令: *取消*\n命令: _.MSPACE'}<ScrollUp /></History>
              <Prompt>命令:<ScrollRight /></Prompt>
            </CommandMain>
          </Command>
        </Center>
        <Palette $w={29} $pl={4}>
          <PaletteTab $h={175}><PaletteText>图纸集管理器</PaletteText></PaletteTab>
          <PaletteTab $h={175}><PaletteText>工具选项板 - 建筑</PaletteText></PaletteTab>
          <PaletteTab><PaletteText>标注样式管理</PaletteText></PaletteTab>
        </Palette>
      </Main>

      <Status>
        <Coords>114.8762, 61.6523 , 0.0000</Coords>
        <Bar n="s_snap" /><Bar n="s_grid" /><Bar n="s_ortho" /><Bar on n="s_polar" /><Bar on n="s_osnap" /><Bar on n="s_otrack" /><Bar on n="s_ducs" /><Bar on n="s_dyn" /><Bar n="s_lw" /><Bar on n="s_qp" />
        <Spacer $w={245} />
        <ModelLabel>模型</ModelLabel>
        <Ico n="s_layout1" edge /><Ico n="s_layout2" edge />
        <Spacer $w={19} />
        <Ico n="s_pan" /><Ico n="s_zoom" /><Ico n="s_wheel" /><Ico n="s_show" />
        <Spacer $w={49} />
        <Toggle $w={23}><Glyph name="s_maxvp" size={19} /></Toggle>
        <Spacer $w={14} />
        <Ico n="s_hand" w={21} />
        <Ico n="s_vp" w={21} />
        <ScaleText>0.605125<Caret $c="#111" $s={4} /></ScaleText>
        <Ico n="s_anno1" /><Ico n="s_anno2" /><Ico n="s_anno3" />
        <Spacer $w={7} />
        <Workspace><Glyph name="s_gear" size={16} />初始设置工作空间<Caret $c="#111" $s={4} /></Workspace>
        <Spacer $w={5} />
        <Ico n="s_lock" size={17} />
        <Spacer $w={6} />
        <Ico n="s_wrench" w={26} />
        <StatusCaret $c="#111" $s={3.5} />
        <Ico n="s_win" w={18} />
        <Ico n="s_grip" w={18} />
      </Status>

      <Watermark>
        <svg width="48" height="52" viewBox="0 0 48 52" fill="none" stroke="#bcc0c8" strokeWidth="3.400" strokeLinecap="round" strokeLinejoin="round">
          <path d="M3 14v25q0 6 6 9" />
          <path d="M12 40V8q0-5 6-3l24 15q5 5 0 10L19 47" />
          <path d="M19 19v13l10-6.500z" fill="#bcc0c8" stroke="none" />
          <path d="M32 19v13" strokeWidth="2.400" />
        </svg>
        <MarkText>
          <MarkTitle>溜溜自学</MarkTitle>
          <MarkSub>ZiXUE.3D66.COM</MarkSub>
        </MarkText>
      </Watermark>
      <IconStrip>
        <svg width="75" height="18" viewBox="0 0 75 18">
          <rect x="0" y="3" width="7" height="11" fill="none" stroke="#1f7fc8" strokeWidth="2" />
          <circle cx="22" cy="5" r="4" fill="#1f7fc8" />
          <path d="M16 15q0-5 6-5t6 5z" fill="#1f7fc8" />
          <rect x="25" y="10" width="6" height="7" fill="#1f5f98" />
          <path d="M36 4l5-2 2 2 2-2 5 2 2 5-4 1v7H40v-7l-4-1z" fill="#1f7fc8" />
          <path d="M58 16l7-8a4 4 0 015-5l-3 3 2 2 3-3" fill="none" stroke="#1f7fc8" strokeWidth="2.400" />
        </svg>
      </IconStrip>
      <Booster>
        <BoosterArt viewBox="0 0 46 100">
          <path d="M1 15l6-6-1-5 8 2 5-5 6 4 8-4 6 4 7-2v24l-8 1-6 2-8-1-8 1 3 7-8-7-7-2 2-6z" fill="#fbe9e2" stroke="#e7c9c0" />
          <path d="M7 48l7-4 4 4-6 6z" fill="#e62a2a" />
          <path d="M16 62q-2-6 6-12 2-12 12-9 8-2 12 0v34H28z" fill="#7ec52c" />
          <path d="M24 50l4 3-4 2M36 47l-3 3 3 2" stroke="#3a6a10" fill="none" />
          <circle cx="28" cy="40" r="1.500" fill="#7ec52c" />
          <circle cx="51" cy="80" r="20" fill="#d92a24" stroke="#f4f4f4" strokeWidth="2" />
        </BoosterArt>
        <BoostLabel>点我加速</BoostLabel>
        <BoostNum>89</BoostNum>
      </Booster>
    </Screen>
  );
}
